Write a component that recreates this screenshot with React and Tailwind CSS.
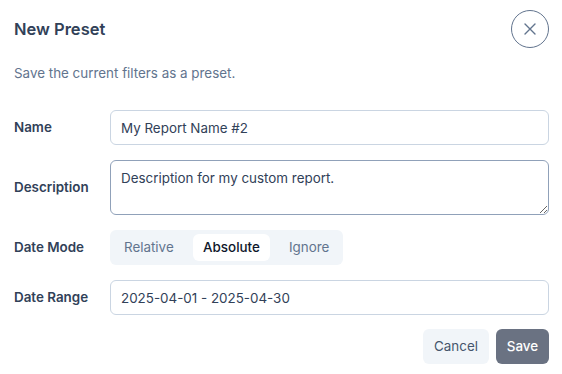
import React from "react";

export default function App() {
  const font = { fontFamily: "Inter, 'Noto Sans', sans-serif" };
  return (
    <div className="w-[562px] h-[374px] bg-white pl-[14px] pr-[13px] pt-[10px] text-slate-700" style={font}>
      <div className="flex items-center justify-between h-[38px]">
        <h2 className="text-[16.5px] font-semibold text-slate-700">New Preset</h2>
        <button className="w-[38px] h-[38px] rounded-full border border-slate-500 flex items-center justify-center text-slate-500">
          <svg width="14" height="14" viewBox="0 0 14 14" fill="none" stroke="currentColor" strokeWidth="1.4" strokeLinecap="round">
            <path d="M2 2L12 12M12 2L2 12" />
          </svg>
        </button>
      </div>
      <p className="mt-[15px] text-[13.4px] leading-[20px] text-slate-500">Save the current filters as a preset.</p>
      <div className="mt-[27px] flex flex-col gap-[15px]">
        <div className="flex items-center">
          <label className="w-[96px] text-[13.4px] font-semibold text-slate-700">Name</label>
          <input
            className="flex-1 h-[35px] rounded-md border border-slate-300 px-[10px] text-[13.4px] text-slate-700 outline-none"
            defaultValue="My Report Name #2"
            style={font}
          />
        </div>
        <div className="flex items-center">
          <label className="w-[96px] text-[13.4px] font-semibold text-slate-700">Description</label>
          <textarea
            className="flex-1 h-[55px] rounded-md border border-slate-400 px-[10px] py-[7px] text-[13.4px] leading-[20px] text-slate-700 outline-none block"
            defaultValue="Description for my custom report."
            style={font}
          />
        </div>
        <div className="flex items-center">
          <label className="w-[96px] text-[13.4px] font-semibold text-slate-700">Date Mode</label>
          <div className="flex items-center h-[35px] w-[233px] rounded-md bg-slate-100 p-[4px]">
            <span className="w-[79px] pl-[10px] h-[27px] flex items-center text-[13.4px] text-slate-500">Relative</span>
            <span className="w-[77px] h-[27px] flex items-center justify-center rounded-md bg-white text-[13.4px] font-medium text-slate-900">Absolute</span>
            <span className="pl-[19px] h-[27px] flex items-center text-[13.4px] text-slate-500">Ignore</span>
          </div>
        </div>
        <div className="flex items-center">
          <label className="w-[96px] text-[13.4px] font-semibold text-slate-700">Date Range</label>
          <input
            className="flex-1 h-[35px] rounded-md border border-slate-300 px-[10px] text-[13.4px] text-slate-700 outline-none"
            defaultValue="2025-04-01 - 2025-04-30"
            style={font}
          />
        </div>
      </div>
      <div className="mt-[14px] flex justify-end gap-[7px]">
        <button className="h-[35px] w-[66px] rounded-md bg-slate-100 text-[13.4px] text-slate-600" style={font}>Cancel</button>
        <button className="h-[35px] w-[53px] rounded-md bg-gray-500 text-[13.4px] font-medium text-white" style={font}>Save</button>
      </div>
    </div>
  );
}
